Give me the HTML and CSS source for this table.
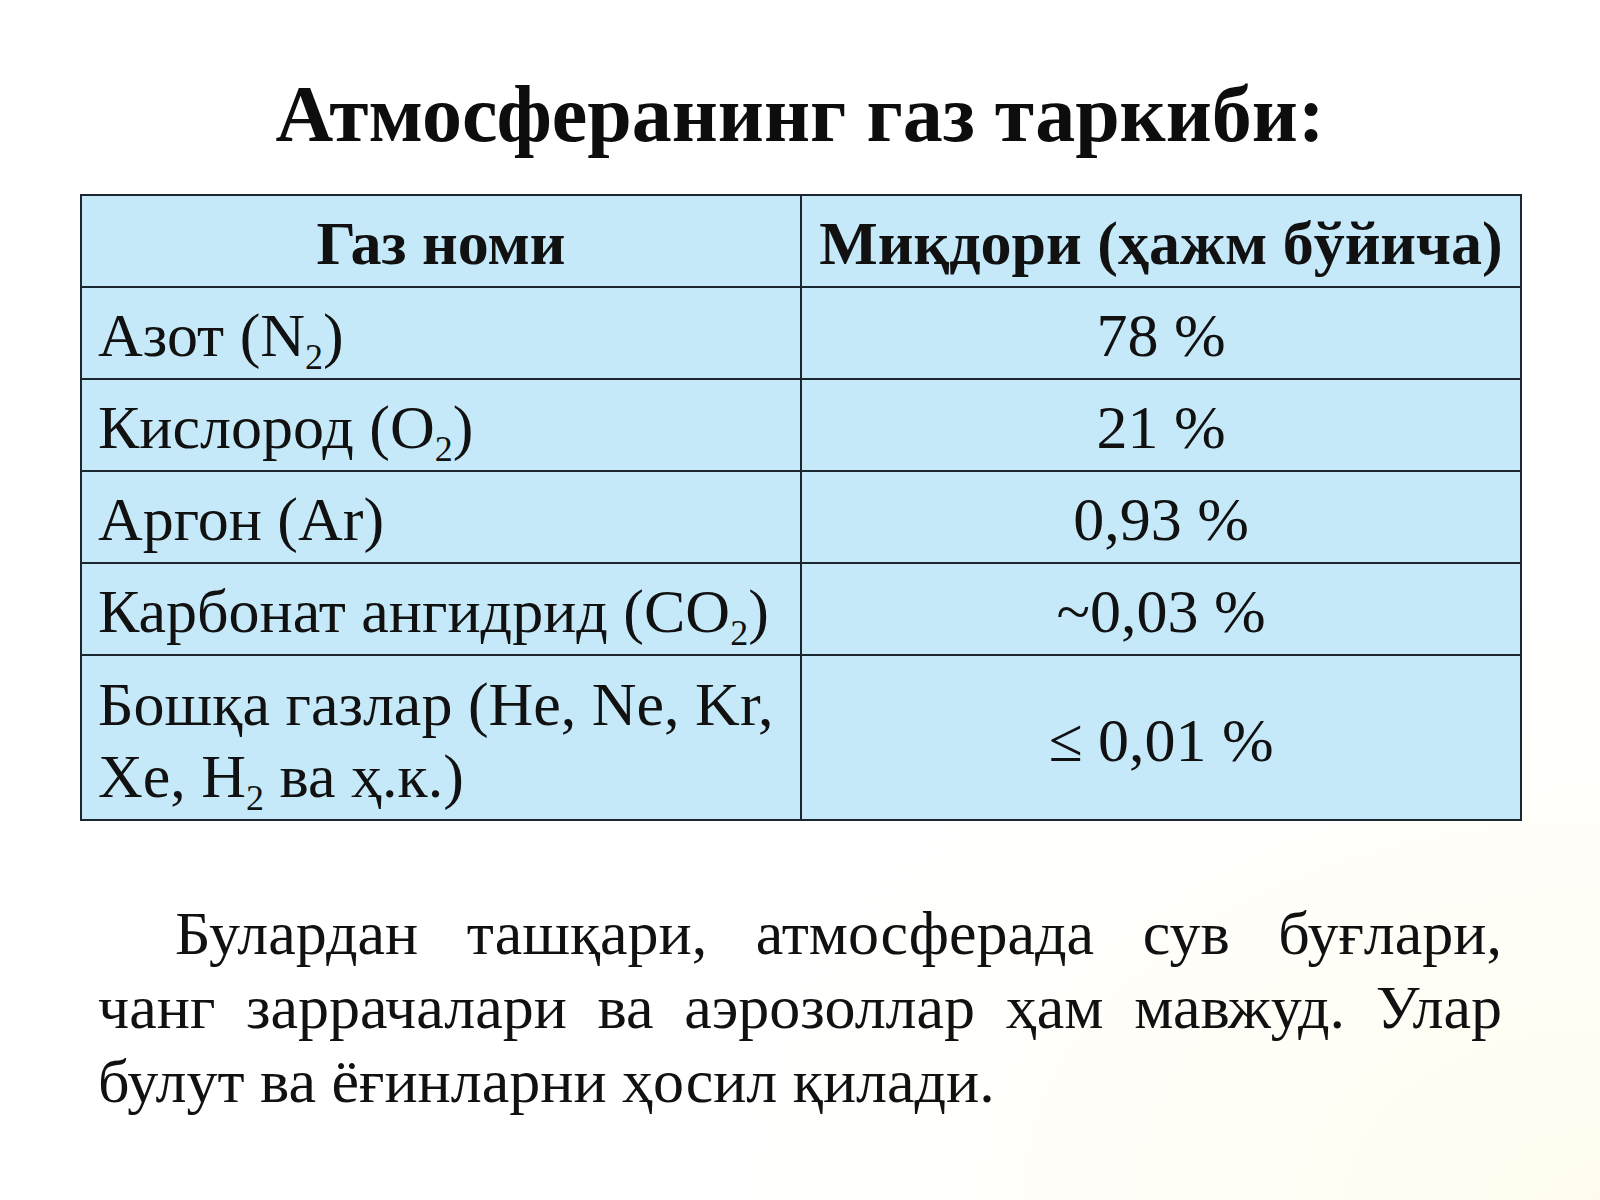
FILE: index.html
```html
<!DOCTYPE html>
<html lang="uz">
<head>
<meta charset="utf-8">
<title>Атмосферанинг газ таркиби</title>
<link rel="stylesheet" href="styles.css">
</head>
<body>
<main class="slide">
  <h1 class="title">Атмосферанинг газ таркиби:</h1>
  <table class="gas-table">
    <thead>
      <tr>
        <th class="cell head">Газ номи</th>
        <th class="cell head">Миқдори (ҳажм бўйича)</th>
      </tr>
    </thead>
    <tbody>
      <tr>
        <td class="cell name">Азот (N<sub class="sub">2</sub>)</td>
        <td class="cell value">78 %</td>
      </tr>
      <tr>
        <td class="cell name">Кислород (O<sub class="sub">2</sub>)</td>
        <td class="cell value">21 %</td>
      </tr>
      <tr>
        <td class="cell name">Аргон (Ar)</td>
        <td class="cell value">0,93 %</td>
      </tr>
      <tr>
        <td class="cell name">Карбонат ангидрид (CO<sub class="sub">2</sub>)</td>
        <td class="cell value">~0,03 %</td>
      </tr>
      <tr class="tall">
        <td class="cell name">Бошқа газлар (He, Ne, Kr, Xe, H<sub class="sub">2</sub> ва ҳ.к.)</td>
        <td class="cell value">≤ 0,01 %</td>
      </tr>
    </tbody>
  </table>
  <p class="note">Булардан ташқари, атмосферада сув буғлари, чанг заррачалари ва аэрозоллар ҳам мавжуд. Улар булут ва ёғинларни ҳосил қилади.</p>
</main>
</body>
</html>
```

FILE: styles.css
```css
html, body {
  margin: 0;
  padding: 0;
}

body {
  width: 1600px;
  height: 1200px;
  overflow: hidden;
  background:
    radial-gradient(ellipse 900px 600px at 100% 100%, #fffcef 0%, rgba(255, 252, 239, 0) 100%),
    #ffffff;
  font-family: "Liberation Serif", "Times New Roman", serif;
  color: #111111;
}

.slide {
  display: flex;
  flex-direction: column;
  padding-top: 69px;
}

.title {
  margin: 0;
  font-size: 80px;
  line-height: 90px;
  font-weight: bold;
  text-align: center;
  color: #0d0d0d;
}

.gas-table {
  margin: 35px 0 0 80px;
  width: 1440px;
  border-collapse: collapse;
  table-layout: fixed;
  background: #c5e9f8;
  border: 2px solid #1c2631;
}

.cell {
  width: 720px;
  height: 92px;
  box-sizing: border-box;
  border: 2px solid #1c2631;
  padding: 4px 16px 0 16px;
  font-size: 62px;
  line-height: 72px;
  vertical-align: middle;
}

.head {
  font-weight: bold;
  text-align: center;
  padding-left: 0;
  padding-right: 0;
}

.name {
  text-align: left;
  font-weight: normal;
}

.value {
  text-align: center;
}

.tall .cell {
  height: 165px;
}

.sub {
  font-size: 0.58em;
  line-height: 0;
  vertical-align: -13px;
}

.note {
  margin: 75px 98px 0 98px;
  font-size: 62px;
  line-height: 74px;
  text-align: justify;
  text-indent: 77px;
  color: #111111;
}
```
